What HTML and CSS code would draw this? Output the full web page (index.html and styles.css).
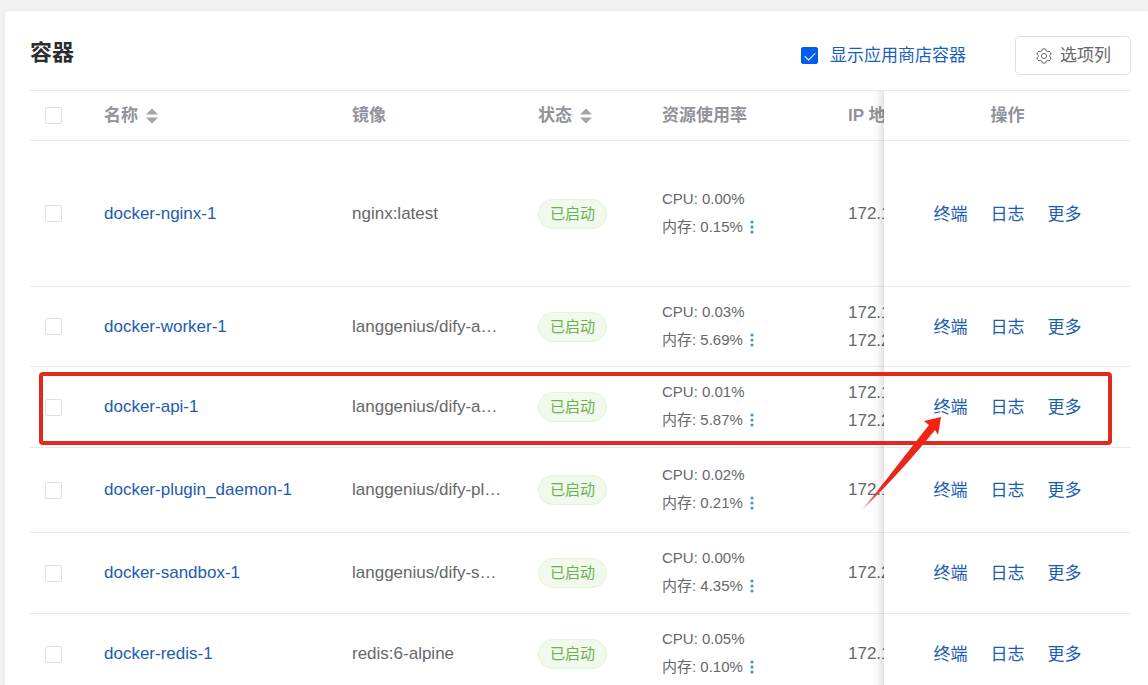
FILE: index.html
```html
<!DOCTYPE html>
<html lang="zh-CN">
<head>
<meta charset="utf-8">
<title>容器</title>
<link rel="stylesheet" href="styles.css">
</head>
<body>
<svg class="defs" aria-hidden="true">
  <symbol id="sort" viewBox="0 0 12 16"><path d="M6 0.5 12 6.5H0ZM0 9.5H12L6 15.5Z" fill="currentColor"/></symbol>
  <symbol id="dots" viewBox="0 0 4 14"><circle cx="2" cy="2" r="1.6"/><circle cx="2" cy="7" r="1.6"/><circle cx="2" cy="12" r="1.6"/></symbol>
</svg>
<main class="card">
  <header class="card-head">
    <h1 class="title">容器</h1>
    <div class="tools">
      <label class="store-toggle"><input class="check" type="checkbox" checked>显示应用商店容器</label>
      <button class="columns-btn" type="button">
        <svg class="gear" viewBox="0 0 16 16" fill="none" stroke="currentColor" stroke-width="1" stroke-linejoin="round" aria-hidden="true">
          <path d="M6.2 1.2 Q8 .4 9.8 1.2 L10.2 3 L11.3 3.6 L13.1 3.1 Q14.7 4.3 15 6.2 L13.7 7.5 V8.5 L15 9.8 Q14.7 11.7 13.1 12.9 L11.3 12.4 L10.2 13 L9.8 14.8 Q8 15.6 6.2 14.8 L5.8 13 L4.7 12.4 L2.9 12.9 Q1.3 11.7 1 9.8 L2.3 8.5 V7.5 L1 6.2 Q1.3 4.3 2.9 3.1 L4.7 3.6 L5.8 3Z"/>
          <circle cx="8" cy="8" r="2.6"/>
        </svg>
        选项列
      </button>
    </div>
  </header>

  <div class="table-wrap">
    <table class="table">
      <colgroup><col class="c-check"><col class="c-name"><col class="c-image"><col class="c-state"><col class="c-usage"><col class="c-ip"><col class="c-ops"></colgroup>
      <thead>
        <tr>
          <th><input class="check" type="checkbox" aria-label="全选"></th>
          <th><span class="sortable">名称<svg class="sort"><use href="#sort"/></svg></span></th>
          <th>镜像</th>
          <th><span class="sortable">状态<svg class="sort"><use href="#sort"/></svg></span></th>
          <th>资源使用率</th>
          <th>IP 地址</th>
          <th class="ops-cell">操作</th>
        </tr>
      </thead>
      <tbody>
        <tr class="row-tall">
          <td><input class="check" type="checkbox" aria-label="docker-nginx-1"></td>
          <td><a class="link" href="#">docker-nginx-1</a></td>
          <td>nginx:latest</td>
          <td><span class="tag">已启动</span></td>
          <td class="usage"><div>CPU: 0.00%</div><div class="mem">内存: 0.15%<button class="more" type="button" aria-label="详情"><svg class="dots"><use href="#dots"/></svg></button></div></td>
          <td>172.18.0.5</td>
          <td class="ops-cell"><div class="ops"><a class="link" href="#">终端</a><a class="link" href="#">日志</a><a class="link" href="#">更多</a></div></td>
        </tr>
        <tr class="row-short">
          <td><input class="check" type="checkbox" aria-label="docker-worker-1"></td>
          <td><a class="link" href="#">docker-worker-1</a></td>
          <td>langgenius/dify-a…</td>
          <td><span class="tag">已启动</span></td>
          <td class="usage"><div>CPU: 0.03%</div><div class="mem">内存: 5.69%<button class="more" type="button" aria-label="详情"><svg class="dots"><use href="#dots"/></svg></button></div></td>
          <td>172.18.0.7<br>172.20.0.4</td>
          <td class="ops-cell"><div class="ops"><a class="link" href="#">终端</a><a class="link" href="#">日志</a><a class="link" href="#">更多</a></div></td>
        </tr>
        <tr>
          <td><input class="check" type="checkbox" aria-label="docker-api-1"></td>
          <td><a class="link" href="#">docker-api-1</a></td>
          <td>langgenius/dify-a…</td>
          <td><span class="tag">已启动</span></td>
          <td class="usage"><div>CPU: 0.01%</div><div class="mem">内存: 5.87%<button class="more" type="button" aria-label="详情"><svg class="dots"><use href="#dots"/></svg></button></div></td>
          <td>172.18.0.6<br>172.20.0.3</td>
          <td class="ops-cell"><div class="ops"><a class="link" href="#">终端</a><a class="link" href="#">日志</a><a class="link" href="#">更多</a></div></td>
        </tr>
        <tr class="row-mid">
          <td><input class="check" type="checkbox" aria-label="docker-plugin_daemon-1"></td>
          <td><a class="link" href="#">docker-plugin_daemon-1</a></td>
          <td>langgenius/dify-pl…</td>
          <td><span class="tag">已启动</span></td>
          <td class="usage"><div>CPU: 0.02%</div><div class="mem">内存: 0.21%<button class="more" type="button" aria-label="详情"><svg class="dots"><use href="#dots"/></svg></button></div></td>
          <td>172.18.0.4</td>
          <td class="ops-cell"><div class="ops"><a class="link" href="#">终端</a><a class="link" href="#">日志</a><a class="link" href="#">更多</a></div></td>
        </tr>
        <tr>
          <td><input class="check" type="checkbox" aria-label="docker-sandbox-1"></td>
          <td><a class="link" href="#">docker-sandbox-1</a></td>
          <td>langgenius/dify-s…</td>
          <td><span class="tag">已启动</span></td>
          <td class="usage"><div>CPU: 0.00%</div><div class="mem">内存: 4.35%<button class="more" type="button" aria-label="详情"><svg class="dots"><use href="#dots"/></svg></button></div></td>
          <td>172.20.0.2</td>
          <td class="ops-cell"><div class="ops"><a class="link" href="#">终端</a><a class="link" href="#">日志</a><a class="link" href="#">更多</a></div></td>
        </tr>
        <tr>
          <td><input class="check" type="checkbox" aria-label="docker-redis-1"></td>
          <td><a class="link" href="#">docker-redis-1</a></td>
          <td>redis:6-alpine</td>
          <td><span class="tag">已启动</span></td>
          <td class="usage"><div>CPU: 0.05%</div><div class="mem">内存: 0.10%<button class="more" type="button" aria-label="详情"><svg class="dots"><use href="#dots"/></svg></button></div></td>
          <td>172.18.0.3</td>
          <td class="ops-cell"><div class="ops"><a class="link" href="#">终端</a><a class="link" href="#">日志</a><a class="link" href="#">更多</a></div></td>
        </tr>
      </tbody>
    </table>
  </div>

  <div class="mark-box"></div>
  <svg class="mark-arrow" viewBox="0 0 84 98" aria-hidden="true">
    <defs><linearGradient id="tail" x1="0" y1="1" x2="1" y2="0"><stop offset="0" stop-color="#e02a20" stop-opacity=".4"/><stop offset=".25" stop-color="#e02a20"/><stop offset="1" stop-color="#f5220f"/></linearGradient></defs>
    <path d="M81 2 78 20 75 15 C55 40 28 70 2 95 C24 68 45 40 69 10 L64 6Z" fill="url(#tail)"/>
  </svg>
</main>
</body>
</html>
```
FILE: styles.css
```css
* { box-sizing: border-box; }

body {
  margin: 0;
  height: 100vh;
  overflow: hidden;
  padding: 11px 0 0 5px;
  background: #f2f2f2;
  color: #65676b;
  font: 17px/28px "Liberation Sans", "Noto Sans CJK SC", sans-serif;
}

.defs { position: absolute; width: 0; height: 0; }

.card {
  position: relative;
  padding: 25px 17px 0 25px;
  background: #fff;
  border-top-left-radius: 4px;
  box-shadow: 0 0 4px rgba(0, 0, 0, 0.06);
}

.card-head {
  display: flex;
  justify-content: space-between;
  align-items: center;
  margin-bottom: 15px;
}

.title {
  margin: 0;
  padding-bottom: 6px;
  font-size: 22px;
  line-height: 32px;
  color: #2b2d31;
}

.tools { display: flex; align-items: center; gap: 49px; }

.store-toggle {
  display: flex;
  align-items: center;
  gap: 12px;
  color: #1a5dc0;
}

.columns-btn {
  display: flex;
  align-items: center;
  gap: 8px;
  height: 39px;
  padding: 0 19px 0 20px;
  border: 1px solid #dcdfe6;
  border-radius: 5px;
  background: #fff;
  color: #65676b;
  font: inherit;
}

.gear { width: 16px; height: 16px; }

.check {
  appearance: none;
  display: block;
  width: 17px;
  height: 17px;
  margin: 0;
  border: 1px solid #dcdfe6;
  border-radius: 2px;
  background: #fff;
}

.check:checked {
  border-color: #005eeb;
  background: #005eeb;
}

.check:checked::after {
  content: "";
  display: block;
  width: 9px;
  height: 5px;
  margin: 4px 3px;
  border: solid #fff;
  border-width: 0 0 1px 1px;
  transform: rotate(-45deg);
}

.table-wrap { overflow: hidden; border-top: 1px solid #e8e9ec; }

.table {
  width: 100%;
  min-width: 1270px;
  table-layout: fixed;
  border-collapse: separate;
  border-spacing: 0;
}

.c-check { width: 59px; }
.c-name { width: 248px; }
.c-image { width: 186px; }
.c-state { width: 124px; }
.c-usage { width: 186px; }
.c-ops { width: 247px; }

th, td {
  height: 81px;
  padding: 0 15px;
  border-bottom: 1px solid #e8e9ec;
  text-align: left;
  vertical-align: middle;
  white-space: nowrap;
}

th { height: 50px; color: #909399; font-weight: bold; }
.row-tall td { height: 146px; }
.row-short td { height: 80px; }
.row-mid td { height: 85px; }

.sortable { display: flex; align-items: center; gap: 8px; }
.sort { width: 12px; height: 16px; color: #a0a3a8; }

.link { color: #1c5cb0; text-decoration: none; }

.tag {
  display: block;
  width: max-content;
  padding: 0 11px;
  border: 1px solid #e1f3d8;
  border-radius: 15px;
  background: #f0f9eb;
  color: #6cb052;
  font-size: 15px;
}

td.usage { padding-bottom: 2px; font-size: 15px; }
.mem { display: flex; align-items: center; gap: 7px; }
.more { display: flex; padding: 0; border: 0; background: none; }
.dots { width: 4px; height: 14px; fill: #3a9cc8; }

.ops-cell {
  position: sticky;
  right: 0;
  z-index: 1;
  background: #fff;
  text-align: center;
}

td.ops-cell { padding-top: 2px; }

.ops-cell::before {
  content: "";
  position: absolute;
  top: 0;
  bottom: -1px;
  left: -12px;
  width: 12px;
  background: linear-gradient(to left, rgba(0, 0, 0, 0.11), rgba(0, 0, 0, 0.03) 50%, transparent);
}

.ops { display: flex; justify-content: center; gap: 23px; }

.mark-box {
  position: absolute;
  z-index: 2;
  top: 361px;
  left: 34px;
  right: 36px;
  height: 73px;
  border: 4px solid #e2281f;
  border-radius: 4px;
  pointer-events: none;
}

.mark-arrow {
  position: absolute;
  z-index: 3;
  top: 404px;
  right: 204px;
  width: 84px;
  height: 98px;
  pointer-events: none;
}
```
